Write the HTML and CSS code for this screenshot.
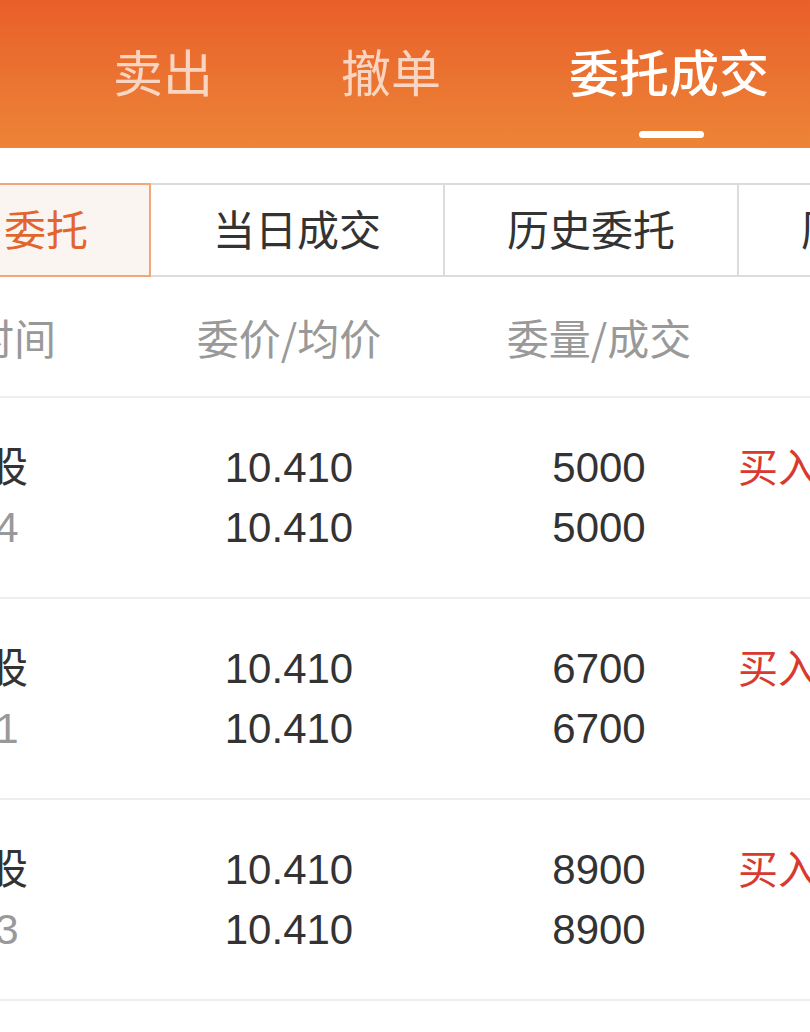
FILE: index.html
```html
<!DOCTYPE html>
<html lang="zh-CN">
<head>
  <meta charset="utf-8">
  <title>委托成交</title>
  <meta name="viewport" content="width=device-width, initial-scale=1">
  <link rel="stylesheet" href="styles.css">
</head>
<body>
  <div class="screen">
    <header class="topbar">
      <nav class="tabs">
        <div class="tab">买入</div>
        <div class="tab">卖出</div>
        <div class="tab">撤单</div>
        <div class="tab active">委托成交<span class="tab-bar"></span></div>
        <div class="tab">持仓</div>
      </nav>
    </header>

    <div class="subtabs">
      <div class="subtab active">当日委托</div>
      <div class="subtab">当日成交</div>
      <div class="subtab">历史委托</div>
      <div class="subtab">历史成交</div>
    </div>

    <div class="table">
      <div class="row head">
        <div class="cell name">委托时间</div>
        <div class="cell">委价/均价</div>
        <div class="cell qty">委量/成交</div>
        <div class="cell side"></div>
      </div>

      <div class="row">
        <div class="cell name"><span class="title">平安股</span><span class="sub">1024</span></div>
        <div class="cell"><span>10.410</span><span>10.410</span></div>
        <div class="cell qty"><span>5000</span><span>5000</span></div>
        <div class="cell side"><span class="buy">买入</span><span>&nbsp;</span></div>
      </div>

      <div class="row">
        <div class="cell name"><span class="title">平安股</span><span class="sub">1021</span></div>
        <div class="cell"><span>10.410</span><span>10.410</span></div>
        <div class="cell qty"><span>6700</span><span>6700</span></div>
        <div class="cell side"><span class="buy">买入</span><span>&nbsp;</span></div>
      </div>

      <div class="row">
        <div class="cell name"><span class="title">平安股</span><span class="sub">1013</span></div>
        <div class="cell"><span>10.410</span><span>10.410</span></div>
        <div class="cell qty"><span>8900</span><span>8900</span></div>
        <div class="cell side"><span class="buy">买入</span><span>&nbsp;</span></div>
      </div>
    </div>
  </div>
</body>
</html>
```

FILE: styles.css
```css
body {
  margin: 0;
  background: #fff;
  font-family: "Liberation Sans", "Noto Sans CJK SC", sans-serif;
  color: #333;
}
.screen {
  width: 810px;
  height: 1032px;
  overflow: hidden;
  background: #fff;
}
.topbar {
  height: 148px;
  background: linear-gradient(180deg, #e95f2a 0%, #ec8537 100%);
  box-sizing: border-box;
  padding-top: 50px;
}
.tabs {
  display: flex;
  gap: 128px;
  margin-left: -115px;
  white-space: nowrap;
}
.tab {
  display: flex;
  flex-direction: column;
  align-items: center;
  font-size: 50px;
  line-height: 50px;
  color: rgba(255, 255, 255, 0.7);
}
.tab.active {
  color: #fff;
  font-weight: 500;
}
.tab-bar {
  width: 65px;
  height: 7px;
  margin-top: 31px;
  margin-left: 4px;
  border-radius: 4px;
  background: #fff;
}
.subtabs {
  display: flex;
  margin: 35px 0 0 -143px;
  white-space: nowrap;
}
.subtab {
  flex: 0 0 294px;
  box-sizing: border-box;
  height: 94px;
  padding-bottom: 6px;
  display: flex;
  align-items: center;
  justify-content: center;
  font-size: 42px;
  color: #333;
  border-top: 2px solid #dcdcdc;
  border-bottom: 2px solid #dcdcdc;
  border-right: 2px solid #dcdcdc;
}
.subtab.active {
  color: #e1652d;
  background: #fbf5f1;
  border: 2px solid #f0a878;
}
.table {
  margin-left: -190px;
  width: 1100px;
}
.row {
  display: grid;
  grid-template-columns: 324px 310px 294px 1fr;
  height: 201px;
  box-sizing: border-box;
  border-bottom: 2px solid #eeeeee;
  align-items: center;
}
.row.head {
  height: 121px;
}
.cell {
  display: flex;
  flex-direction: column;
  align-items: center;
  font-size: 42px;
  line-height: 60px;
  white-space: nowrap;
}
.head .cell {
  font-family: "Noto Sans CJK SC", sans-serif;
  font-size: 42px;
  color: #999;
}
.cell.qty {
  padding-left: 16px;
}
.cell.side {
  align-items: flex-start;
}
.cell .title {
  padding-right: 14px;
}
.cell .sub {
  color: #999;
}
.buy {
  color: #d93a2e;
  font-size: 40px;
}
```
